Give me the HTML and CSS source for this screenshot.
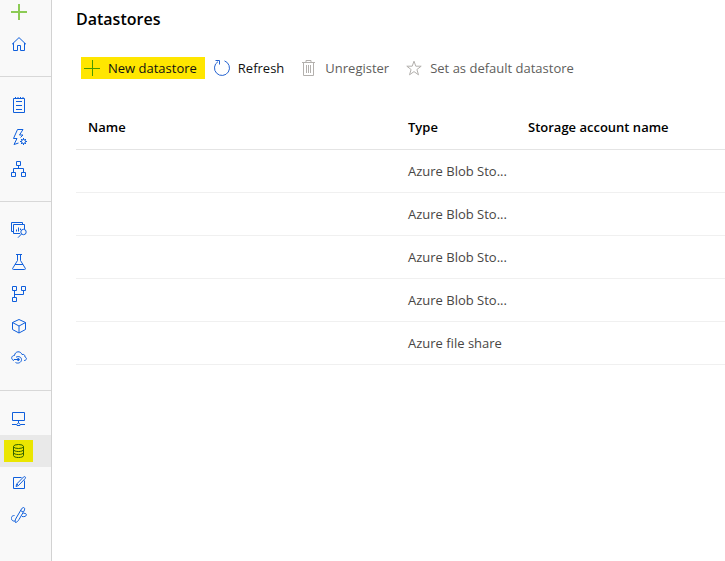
FILE: index.html
```html
<!DOCTYPE html>
<html lang="en">
<head>
<meta charset="utf-8">
<title>Datastores</title>
<link rel="stylesheet" href="styles.css">
</head>
<body>
<div class="app">
  <nav class="sidebar" aria-label="Workspace">
    <div class="group">
      <a class="item new" href="#" aria-label="New"><svg class="icon" viewBox="0 0 16 16"><path d="M0 8h16M8 0v16"/></svg></a>
      <a class="item" href="#" aria-label="Home"><svg class="icon" viewBox="0 0 16 16"><path d="M1 8.300 8 1.600l7 6.700M2.500 7v7.500h4v-5h3v5h4V7"/></svg></a>
    </div>
    <div class="group">
      <a class="item" href="#" aria-label="Notebooks"><svg class="icon" viewBox="0 0 16 16"><path d="M2.500 1.500h11v14h-11zM5 4.500h6M5 8.500h6M5 12.500h6M4.500 0v2M7 0v2M9.500 0v2M12 0v2"/></svg></a>
      <a class="item" href="#" aria-label="Automated ML"><svg class="icon" viewBox="0 0 16 16"><path d="M7.500 14 3 15.500 6 9.500H2.500L6.500.5H12L8.500 6H12L9.500 8.500"/><circle cx="12.500" cy="12.500" r="2"/><path d="M12.500 9v1.500M12.500 14.500V16M9 12.500h1.500M14.500 12.500H16M10 10l1 1M14 14l1 1M10 15l1-1M14 11l1-1"/></svg></a>
      <a class="item" href="#" aria-label="Designer"><svg class="icon" viewBox="0 0 16 16"><path d="M5.500.5h4v4h-4zM.5 11.500h4v4h-4zM10.500 11.500h4v4h-4zM7.500 4.500v3M2.500 11.500v-4h10v4"/></svg></a>
    </div>
    <div class="group">
      <a class="item" href="#" aria-label="Datasets"><svg class="icon" viewBox="0 0 16 16"><path d="M2.500 9.500h-2v-9h11v2M9 11.500H2.500v-9h11V7M5.500 9.500v-2M7.500 9.500v-4M9.500 8V6.500"/><circle cx="12.500" cy="10" r="2.700"/><path d="m10.500 12-3.500 3.700"/></svg></a>
      <a class="item" href="#" aria-label="Experiments"><svg class="icon" viewBox="0 0 16 16"><path d="M5 .5h6M6.500.5v6L1.700 14.300q-.4 1.200.8 1.200h11q1.200 0 .8-1.200L9.500 6.500v-6M4 10.500h8"/></svg></a>
      <a class="item" href="#" aria-label="Pipelines"><svg class="icon" viewBox="0 0 16 16"><path d="M1.500.5h4v4h-4zM10.500.5h4v4h-4zM1.500 11.500h4v4h-4zM3.500 4.500v7M3.500 8.500h9v-4"/></svg></a>
      <a class="item" href="#" aria-label="Models"><svg class="icon" viewBox="0 0 16 16"><path d="m8 1.500 6.500 3v7L8 15l-6.500-3.500v-7zM1.500 4.500 8 8l6.500-3.500M8 8v7"/></svg></a>
      <a class="item" href="#" aria-label="Endpoints"><svg class="icon" viewBox="0 0 16 16"><path d="M3 10.500C-.5 9.500.2 5.500 3.500 5.500 4 1 9.500.5 11 4.500c2-.5 3 .5 3 2.500 2.500 1 1.500 3.500-1 3.500M5 7.200c3-1.500 5.500 0 5.500 2.500 0 2.800-3.500 4.300-6 2.800M3 9.500h4"/><circle class="solid" cx="7.300" cy="9.500" r="1"/></svg></a>
    </div>
    <div class="group">
      <a class="item" href="#" aria-label="Compute"><svg class="icon" viewBox="0 0 16 16"><path d="M1.500 1.500h12v8h-12zM7.500 9.500v2.500M1 13.500h4.500M9.500 13.500H14M5.500 13.500l2-1.500 2 1.500-.5 1H6z"/></svg></a>
      <a class="item selected" href="#" aria-label="Datastores" aria-current="page"><span class="mark"><svg class="icon" viewBox="0 0 16 16"><ellipse cx="7.500" cy="3.500" rx="5" ry="2"/><path d="M2.500 3.500v9c0 2.700 10 2.700 10 0v-9M2.500 6.500c0 2.700 10 2.700 10 0M2.500 9.500c0 2.700 10 2.700 10 0"/></svg></span></a>
      <a class="item" href="#" aria-label="Data labeling"><svg class="icon" viewBox="0 0 16 16"><path d="M10.500 2.500h-8v11h11v-8M5 11.500l.8-2.600L12.500 2q1-.8 1.700-.1t-.1 1.700L7.500 10.500zM6 9l1.500 1.500"/></svg></a>
      <a class="item" href="#" aria-label="Linked services"><svg class="icon" viewBox="0 0 16 16"><path d="M3.500 8.500C.5 8.500-.3 11 .8 12.800c.7 1.200 2 1.500 3.500 1.200M4.500 15.500c-.7-1.500-.2-3 .7-4.500L10.500 2c1-1.500 2-1.700 2.700-1.200s.6 1.700-.2 3.200l-5 8.500c-1 1.700-2 2.700-3.500 3M9.500 3.500l2.500 1.500M12.500 6.500c2-.5 3.200.5 2.800 1.700-.3 1-1.800 1.800-4.300 1.300"/></svg></a>
    </div>
  </nav>
  <main class="content">
    <h1 class="title">Datastores</h1>
    <div class="toolbar">
      <button class="command marked" type="button"><svg class="icon" viewBox="0 0 16 16"><path d="M0 8.500h16M8.500 0v16"/></svg>New datastore</button>
      <button class="command refresh" type="button"><svg class="icon" viewBox="0 0 16 16"><path d="M10.500.9A7.500 7.500 0 1 1 4 1.600M1.500.5h4v4"/></svg>Refresh</button>
      <button class="command" type="button" disabled><svg class="icon" viewBox="0 0 16 16"><path d="M1 2.500h13M5 2.500v-2h5v2M2.500 2.500v13h10v-13M5.500 5v8M7.500 5v8M9.500 5v8"/></svg>Unregister</button>
      <button class="command" type="button" disabled><svg class="icon" viewBox="0 0 16 16"><path d="m8 1.200 1.800 5h5.400l-4.300 3.300 1.600 5.300L8 11.600l-4.500 3.200 1.600-5.300L.8 6.200h5.400z"/></svg>Set as default datastore</button>
    </div>
    <table class="grid">
      <colgroup><col class="col-name"><col class="col-type"><col></colgroup>
      <thead><tr><th scope="col">Name</th><th scope="col">Type</th><th scope="col">Storage account name</th></tr></thead>
      <tbody>
        <tr><td></td><td>Azure Blob Sto...</td><td></td></tr>
        <tr><td></td><td>Azure Blob Sto...</td><td></td></tr>
        <tr><td></td><td>Azure Blob Sto...</td><td></td></tr>
        <tr><td></td><td>Azure Blob Sto...</td><td></td></tr>
        <tr><td></td><td>Azure file share</td><td></td></tr>
      </tbody>
    </table>
  </main>
</div>
</body>
</html>
```
FILE: styles.css
```css
* { box-sizing: border-box; }
body {
  margin: 0;
  background: #fff;
  color: #000;
  font: 13px/20px "Open Sans", "Noto Sans", sans-serif;
}
.app { display: flex; min-height: 100vh; }
.sidebar {
  flex: none;
  width: 52px;
  background: #f9f9f9;
  border-right: 1px solid #d2d2d2;
  overflow: hidden;
}
.group { padding: 12px 0 16px; border-top: 1px solid #d8d8d8; }
.group:first-child { margin-top: -4px; padding-top: 0; border-top: 0; }
.item {
  display: flex;
  align-items: center;
  height: 32px;
  padding-left: 11px;
  color: #0f5fdc;
}
.item.new { color: #8ccb55; }
.item.selected { padding-left: 4px; background: #e9e9e9; color: #2f6100; }
.mark { display: flex; align-items: center; height: 22px; padding: 0 6px 0 7px; background: #ebe600; }
.icon {
  flex: none;
  width: 16px;
  height: 16px;
  fill: none;
  stroke: currentColor;
  stroke-width: 1;
}
.new .icon { stroke-width: 2; }
.solid { fill: currentColor; }
.content { flex: 1; min-width: 0; padding: 8px 0 0 24px; }
.title { margin: 0; font-size: 16px; line-height: 22px; font-weight: 600; }
.toolbar { display: flex; gap: 6px; margin: 27px 0 0 5px; }
.command {
  display: flex;
  align-items: center;
  gap: 8px;
  height: 22px;
  padding: 0 8px 0 3px;
  border: 0;
  background: none;
  color: #111;
  font: inherit;
  white-space: nowrap;
}
.command.marked { background: #ffe600; }
.marked .icon { color: #4a9a00; }
.refresh .icon { color: #2563d0; }
.command:disabled { color: #605e5c; }
.command:disabled .icon { color: #b3b0ad; }
.grid { width: 100%; margin-top: 27px; border-collapse: collapse; table-layout: fixed; }
.col-name { width: 320px; }
.col-type { width: 120px; }
.grid th, .grid td {
  height: 43px;
  padding: 0 0 0 12px;
  border-bottom: 1px solid #f0f0f0;
  text-align: left;
  white-space: nowrap;
}
.grid th { border-bottom-color: #e4e4e4; font-weight: 600; }
.grid td { color: #484644; }
```
